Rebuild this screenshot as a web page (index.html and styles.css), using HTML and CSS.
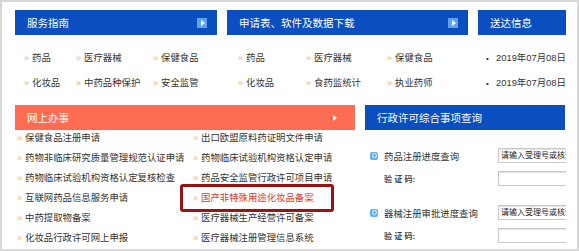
FILE: index.html
```html
<!DOCTYPE html>
<html lang="zh-CN">
<head>
  <meta charset="UTF-8">
  <title>服务指南 - 网上办事</title>
  <link rel="stylesheet" href="styles.css">
</head>
<body>
  <div class="frame">
    <div class="page">
      <div class="top">
        <section>
          <h3 class="bar bar-blue">服务指南<span class="more"></span></h3>
          <ul class="links links-guide">
            <li><a href="#">药品</a></li>
            <li><a href="#">医疗器械</a></li>
            <li><a href="#">保健食品</a></li>
            <li><a href="#">化妆品</a></li>
            <li><a href="#">中药品种保护</a></li>
            <li><a href="#">安全监管</a></li>
          </ul>
        </section>

        <section>
          <h3 class="bar bar-blue">申请表、软件及数据下载<span class="more"></span></h3>
          <ul class="links links-forms">
            <li><a href="#">药品</a></li>
            <li><a href="#">医疗器械</a></li>
            <li><a href="#">保健食品</a></li>
            <li><a href="#">化妆品</a></li>
            <li><a href="#">食药监统计</a></li>
            <li><a href="#">执业药师</a></li>
          </ul>
        </section>

        <section>
          <h3 class="bar bar-blue">送达信息</h3>
          <ul class="dates">
            <li>2019年07月08日</li>
            <li>2019年07月08日</li>
          </ul>
        </section>
      </div>

      <div class="bottom">
        <section>
          <h3 class="bar bar-orange">网上办事<span class="tri"></span></h3>
          <ul class="links links-online">
            <li><a href="#">保健食品注册申请</a></li>
            <li><a href="#">出口欧盟原料药证明文件申请</a></li>
            <li><a href="#">药物非临床研究质量管理规范认证申请</a></li>
            <li><a href="#">药物临床试验机构资格认定申请</a></li>
            <li><a href="#">药物临床试验机构资格认定复核检查</a></li>
            <li><a href="#">药品安全监管行政许可项目申请</a></li>
            <li><a href="#">互联网药品信息服务申请</a></li>
            <li class="hl"><a href="#">国产非特殊用途化妆品备案</a></li>
            <li><a href="#">中药提取物备案</a></li>
            <li><a href="#">医疗器械生产经营许可备案</a></li>
            <li><a href="#">化妆品行政许可网上申报</a></li>
            <li><a href="#">医疗器械注册管理信息系统</a></li>
          </ul>
        </section>

        <section>
          <h3 class="bar bar-blue">行政许可综合事项查询</h3>
          <div class="query">
            <div class="q-group">
              <div class="q-row">
                <span class="q-label"><i class="q-icon"></i>药品注册进度查询</span>
                <input type="text" placeholder="请输入受理号或核验码">
              </div>
              <div class="q-row">
                <span class="q-label q-code">验 证 码:</span>
                <input type="text">
              </div>
            </div>
            <div class="q-group">
              <div class="q-row">
                <span class="q-label"><i class="q-icon"></i>器械注册审批进度查询</span>
                <input type="text" placeholder="请输入受理号或核验码">
              </div>
              <div class="q-row">
                <span class="q-label q-code">验 证 码:</span>
                <input type="text">
              </div>
            </div>
          </div>
        </section>
      </div>
    </div>
  </div>
</body>
</html>
```

FILE: styles.css
```css
body {
  margin: 0;
  font-family: "Liberation Sans", "Noto Sans CJK SC", sans-serif;
  color: #333;
  background: #fff;
}

ul {
  list-style: none;
  margin: 0;
  padding: 0;
}

a {
  color: #333;
  text-decoration: none;
}

.frame {
  width: 579px;
  height: 251px;
  box-sizing: border-box;
  border: 2px solid #d8d8d8;
}

.page {
  box-sizing: border-box;
  width: 564px;
  height: 100%;
  padding: 8px 0 0 13px;
  overflow: hidden;
}

.top {
  display: grid;
  grid-template-columns: 202px 241px 150px;
  column-gap: 10px;
}

.bottom {
  display: grid;
  grid-template-columns: 340px 200px;
  column-gap: 10px;
  margin-top: 10px;
}

.bar {
  margin: 0;
  height: 25px;
  padding: 0 10px 0 12px;
  display: flex;
  align-items: center;
  justify-content: space-between;
  font-size: 10.5px;
  font-weight: normal;
  color: #fff;
}

.bar-blue {
  background: #0b4ebf;
}

.bar-orange {
  background: #fe6c53;
}

.more {
  width: 10px;
  height: 10px;
  background: #5aa5f2;
  display: flex;
  align-items: center;
  justify-content: center;
}

.more::after {
  content: "";
  border-left: 4px solid #fff;
  border-top: 3px solid transparent;
  border-bottom: 3px solid transparent;
  margin-left: 1px;
}

.tri {
  border-left: 4px solid #fff;
  border-top: 3px solid transparent;
  border-bottom: 3px solid transparent;
  margin-right: 8px;
}

/* link lists */
.links {
  display: grid;
  font-size: 9.4px;
}

.links li {
  white-space: nowrap;
}

.links a::before {
  content: "»";
  display: inline-block;
  width: 8px;
  color: #f5a866;
  font-size: 9px;
}

.links-guide {
  grid-template-columns: 52px 77px auto;
  padding: 10px 0 0 9px;
  grid-auto-rows: 25px;
  line-height: 25px;
}

.links-forms {
  grid-template-columns: 68px 81px auto;
  padding: 10px 0 0 11px;
  grid-auto-rows: 25px;
  line-height: 25px;
}

.links-online {
  grid-template-columns: 176px auto;
  padding: 0 0 0 2px;
  margin-top: -2px;
  grid-auto-rows: 20px;
  line-height: 20px;
}

.hl {
  position: relative;
}

.hl a {
  color: #e5352c;
}

.hl::after {
  content: "";
  position: absolute;
  left: -13px;
  top: -4px;
  width: 154px;
  height: 28px;
  box-sizing: border-box;
  border: 3px solid #9a1212;
  border-radius: 3px;
}

.dates {
  padding: 10px 0 0 8px;
  font-size: 9.4px;
  white-space: nowrap;
}

.dates li {
  height: 25px;
  line-height: 25px;
}

.dates li::before {
  content: "•";
  display: inline-block;
  width: 10px;
  font-size: 8px;
}

/* query panel */
.query {
  padding: 18px 0 0 5px;
}

.q-group + .q-group {
  margin-top: 19px;
}

.q-row {
  display: flex;
  align-items: center;
  height: 15px;
}

.q-row + .q-row {
  margin-top: 8px;
}

.q-label {
  width: 128px;
  flex: none;
  display: flex;
  align-items: center;
  font-size: 9.4px;
  white-space: nowrap;
}

.q-code {
  padding-left: 14px;
  box-sizing: border-box;
  font-size: 8px;
  font-weight: bold;
  color: #444;
}

.q-icon {
  width: 8px;
  height: 8px;
  margin-right: 6px;
  border-radius: 2px;
  background: #63b1ee;
  display: flex;
  align-items: center;
  justify-content: center;
}

.q-icon::after {
  content: "";
  width: 3px;
  height: 3px;
  border: 1px solid #e6f3fd;
  border-radius: 50%;
}

.q-row input {
  flex: none;
  width: 110px;
  height: 15px;
  box-sizing: border-box;
  margin: 0;
  padding: 0 2px;
  border: 1px solid #c9c9c9;
  box-shadow: inset 0 1px 1px rgba(0,0,0,0.12);
  font-family: inherit;
  font-size: 8px;
  color: #222;
}

.q-row input::placeholder {
  color: #222;
}
```
